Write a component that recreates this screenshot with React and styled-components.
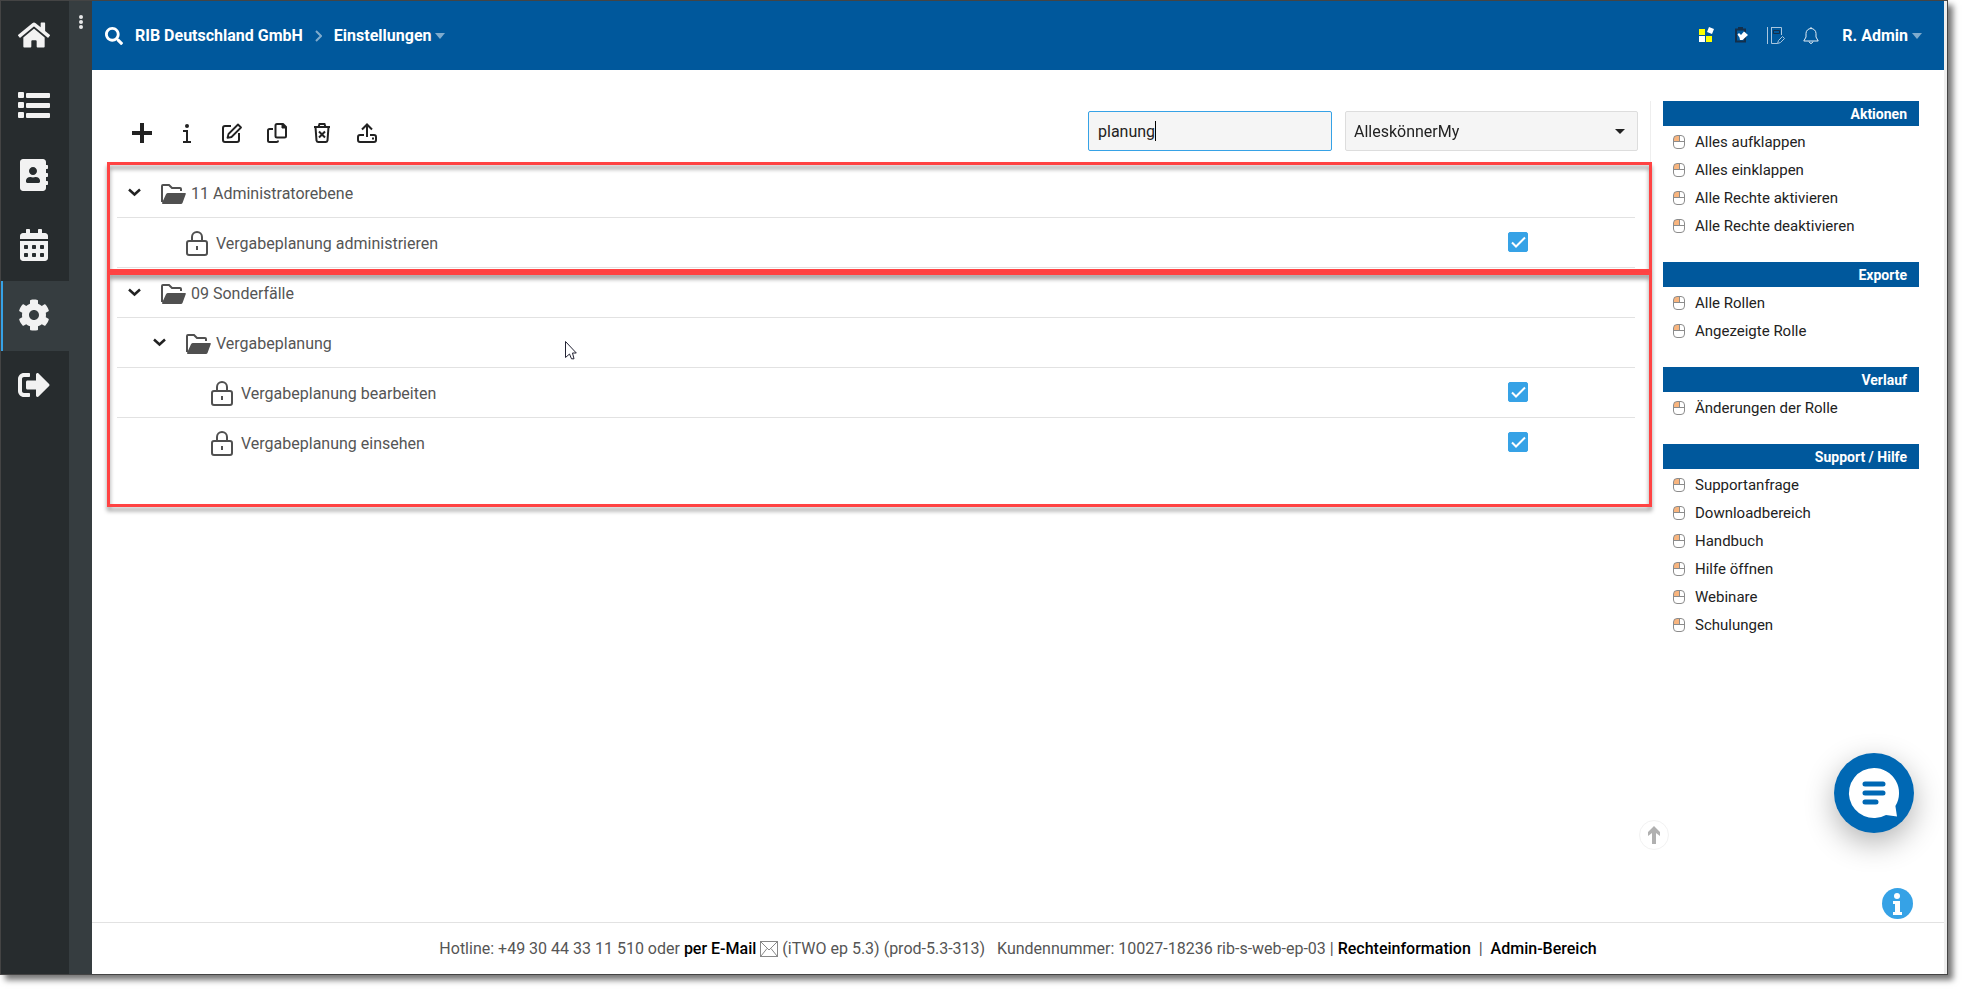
import React, { useState } from 'react'
import styled, { createGlobalStyle } from 'styled-components'
import { FaHome, FaAddressBook, FaCalendarAlt, FaCog, FaSignOutAlt, FaSearch } from 'react-icons/fa'


const NAV = [
    { label: 'Startseite', icon: FaHome },
    { label: 'Liste', icon: ListIcon },
    { label: 'Kontakte', icon: FaAddressBook },
    { label: 'Kalender', icon: FaCalendarAlt },
    { label: 'Administration', icon: FaCog, active: true },
    { label: 'Abmelden', icon: FaSignOutAlt },
]

const GROUPS = [
    {
        id: 'admin',
        rows: [
            { label: '11 Administratorebene', level: 0, folder: true },
            { label: 'Vergabeplanung administrieren', level: 1 },
        ],
    },
    {
        id: 'special',
        rows: [
            { label: '09 Sonderfälle', level: 0, folder: true },
            { label: 'Vergabeplanung', level: 1, folder: true },
            { label: 'Vergabeplanung bearbeiten', level: 2 },
            { label: 'Vergabeplanung einsehen', level: 2 },
        ],
    },
]

const SECTIONS = [
    { title: 'Aktionen', items: ['Alles aufklappen', 'Alles einklappen', 'Alle Rechte aktivieren', 'Alle Rechte deaktivieren'] },
    { title: 'Exporte', items: ['Alle Rollen', 'Angezeigte Rolle'] },
    { title: 'Verlauf', items: ['Änderungen der Rolle'] },
    { title: 'Support / Hilfe', items: ['Supportanfrage', 'Downloadbereich', 'Handbuch', 'Hilfe öffnen', 'Webinare', 'Schulungen'] },
]

const TOOLS = [
    { label: 'Neu', icon: PlusIcon },
    { label: 'Information', icon: InfoIcon },
    { label: 'Bearbeiten', icon: EditIcon },
    { label: 'Kopieren', icon: CopyIcon },
    { label: 'Löschen', icon: TrashIcon },
    { label: 'Exportieren', icon: UploadIcon },
]

export default function App() {
    const [search, setSearch] = useState('planung')

    return (
        <>
            <GlobalStyle />
            <Frame>
                <Nav>
                    {NAV.map(({ label, icon: Icon, active }) => (
                        <NavLink href='#' key={label} aria-label={label} $active={active}>
                            <Icon />
                        </NavLink>
                    ))}
                </Nav>
                <Rail>
                    <RailButton aria-label='Menü'>
                        <svg width='4' height='14' viewBox='0 0 4 14' fill='#e8e8e8'>
                            <circle cx='2' cy='2' r='2' />
                            <circle cx='2' cy='7' r='2' />
                            <circle cx='2' cy='12' r='2' />
                        </svg>
                    </RailButton>
                </Rail>
                <Page>
                    <Header />
                    <Body>
                        <Main>
                            <Toolbar>
                                {TOOLS.map(({ label, icon: Icon }) => (
                                    <ToolButton key={label} aria-label={label}><Icon /></ToolButton>
                                ))}
                                <Filters>
                                    <SearchBox>
                                        <input
                                            aria-label='Suche'
                                            value={search}
                                            autoFocus
                                            onChange={e => setSearch(e.target.value)}
                                        />
                                        <TextCursor aria-hidden='true'>{search}</TextCursor>
                                    </SearchBox>
                                    <SelectBox>
                                        <select aria-label='Rolle' defaultValue='AlleskönnerMy'>
                                            <option>AlleskönnerMy</option>
                                        </select>
                                        <Caret />
                                    </SelectBox>
                                </Filters>
                            </Toolbar>
                            <Tree>
                                {GROUPS.map(group => (
                                    <Group key={group.id} $last={group.id === 'special'}>
                                        {group.rows.map(row => <TreeRow key={row.label} {...row} />)}
                                    </Group>
                                ))}
                            </Tree>
                        </Main>
                        <Aside>
                            {SECTIONS.map(section => (
                                <section key={section.title}>
                                    <SectionTitle>{section.title}</SectionTitle>
                                    <ActionList>
                                        {section.items.map(item => (
                                            <li key={item}>
                                                <a href='#'><MouseIcon />{item}</a>
                                            </li>
                                        ))}
                                    </ActionList>
                                </section>
                            ))}
                        </Aside>
                    </Body>
                    <Footer>
                        <span>Hotline: +49 30 44 33 11 510 oder <a href='#'>per E-Mail</a> <MailIcon /> (iTWO ep 5.3) (prod-5.3-313)&nbsp;&nbsp; Kundennummer: 10027-18236 rib-s-web-ep-03 | <a href='#'>Rechteinformation</a>&nbsp; |&nbsp; <a href='#'>Admin-Bereich</a></span>
                    </Footer>
                </Page>
                <ScrollGutter />
                <TopButton aria-label='Nach oben'>
                    <svg width='12' height='18' viewBox='0 0 12 18' fill='#b0b0b0'>
                        <path d='M6 0 12 6V10L8 7V18H4V7L0 10V6Z' />
                    </svg>
                </TopButton>
                <ChatButton aria-label='Chat'>
                    <svg width='80' height='80' viewBox='0 0 80 80'>
                        <path d='M40 15a25 25 0 1 0 12 46.900l11 1.600-1.600-10.500A25 25 0 0 0 40 15Z' fill='#fff' />
                        <path d='M31 31H49M31 40H49M31 49H42' stroke='#0068b4' strokeWidth='5' strokeLinecap='round' />
                    </svg>
                </ChatButton>
                <HelpButton aria-label='Hilfe'>
                    <svg width='31' height='31' viewBox='0 0 31 31' fill='#fff'>
                        <circle cx='15' cy='8' r='3' />
                        <path d='M11 13h7v11h2v3h-9v-3h2v-8h-2z' />
                    </svg>
                </HelpButton>
                <Pointer width='13' height='21' viewBox='0 0 13 21'>
                    <path d='M1.500 1.500V17.500L5.500 14 7.500 18.800H10L8.500 13H12.300Z' fill='#fff' stroke='#223' strokeLinejoin='round' />
                </Pointer>
            </Frame>
        </>
    )
}

function Header() {
    return (
        <TopBar>
            <IconButton aria-label='Suchen'><FaSearch size={18} /></IconButton>
            <Crumbs>
                <a href='#'>RIB Deutschland GmbH</a>
                <svg width='7' height='12' viewBox='0 0 7 12' fill='none' stroke='#7fabcd' strokeWidth='2'>
                    <path d='M1 1 6 6 1 11' />
                </svg>
                <MenuButton>Einstellungen<Caret $light /></MenuButton>
            </Crumbs>
            <HeaderTools>
                <IconButton aria-label='Module'><TilesIcon /></IconButton>
                <IconButton aria-label='Aufgaben'><ClipboardIcon /></IconButton>
                <IconButton aria-label='Notizen'><NotebookIcon /></IconButton>
                <IconButton aria-label='Benachrichtigungen'><BellIcon /></IconButton>
            </HeaderTools>
            <MenuButton>R. Admin<Caret $light /></MenuButton>
        </TopBar>
    )
}

function TreeRow({ label, level, folder }) {
    const [checked, setChecked] = useState(true)

    return (
        <Row $level={level}>
            <Toggle>
                {folder && (
                    <button aria-label={`${label} einklappen`}>
                        <svg width='13' height='9' viewBox='0 0 13 9' fill='none' stroke='#222' strokeWidth='2.500'>
                            <path d='M1 1.500 6.500 6.500 12 1.500' />
                        </svg>
                    </button>
                )}
            </Toggle>
            <RowIcon>{folder ? <FolderIcon /> : <LockIcon />}</RowIcon>
            {folder ? <RowLabel>{label}</RowLabel> : (
                <>
                    <RowLabel as='label' htmlFor={label}>{label}</RowLabel>
                    <CheckBox>
                        <input id={label} type='checkbox' checked={checked} onChange={e => setChecked(e.target.checked)} />
                        <svg width='20' height='20' viewBox='0 0 20 20' fill='none' stroke='#fff' strokeWidth='2'>
                            <path d='M4 10.500 8 14.500 17 5.500' />
                        </svg>
                    </CheckBox>
                </>
            )}
        </Row>
    )
}

function ListIcon() {
    return (
        <svg width='32' height='28' viewBox='0 0 32 28' fill='currentColor'>
            <rect width='6' height='6' y='1' rx='1' />
            <rect width='6' height='6' y='11' rx='1' />
            <rect width='6' height='6' y='21' rx='1' />
            <rect width='24' height='5' x='8' y='2' rx='1' />
            <rect width='24' height='5' x='8' y='12' rx='1' />
            <rect width='24' height='5' x='8' y='22' rx='1' />
        </svg>
    )
}

function PlusIcon() {
    return (
        <svg width='20' height='20' viewBox='0 0 20 20' fill='#222'>
            <path d='M8 0h4v8h8v4h-8v8H8v-8H0V8h8z' />
        </svg>
    )
}

function InfoIcon() {
    return (
        <svg width='20' height='20' viewBox='0 0 20 20' fill='none' stroke='#222' strokeWidth='2'>
            <circle cx='10' cy='3' r='2' fill='#222' stroke='none' />
            <path d='M6 8h4v11M6 19h8' />
        </svg>
    )
}

function EditIcon() {
    return (
        <svg width='20' height='20' viewBox='0 0 20 20' fill='none' stroke='#222' strokeWidth='2' strokeLinejoin='round'>
            <path d='M9 3H3a2 2 0 0 0-2 2v12a2 2 0 0 0 2 2h12a2 2 0 0 0 2-2v-7' />
            <path d='M6.500 11 16 1.500 19 4.500 9.500 14 5.500 14.800Z' strokeWidth='1.800' />
        </svg>
    )
}

function CopyIcon() {
    return (
        <svg width='20' height='20' viewBox='0 0 20 20' fill='none' stroke='#222' strokeWidth='2' strokeLinejoin='round'>
            <path d='M10 1h6l3 3v9a1.500 1.500 0 0 1-1.500 1.500h-7.500a1.500 1.500 0 0 1-1.500-1.500V2.500A1.500 1.500 0 0 1 10 1z' />
            <path d='M15 1v4h4z' fill='#222' strokeWidth='1' />
            <path d='M6 6H2.500A1.500 1.500 0 0 0 1 7.500v10A1.500 1.500 0 0 0 2.500 19h7a1.500 1.500 0 0 0 1.500-1.500' />
        </svg>
    )
}

function TrashIcon() {
    return (
        <svg width='20' height='20' viewBox='0 0 20 20' fill='none' stroke='#222' strokeWidth='2'>
            <path d='M2 4h16M6.500 4 7.500 1h5l1 3M3.500 4 4.500 17.500a2 2 0 0 0 2 1.500h7a2 2 0 0 0 2-1.500L16.500 4' />
            <path d='m7 8.500 6 6m0-6-6 6' />
        </svg>
    )
}

function UploadIcon() {
    return (
        <svg width='20' height='20' viewBox='0 0 20 20' fill='none' stroke='#222' strokeWidth='2'>
            <path d='M10 14V2M5 6.500 10 1.500l5 5' />
            <path d='M7 12H3a2 2 0 0 0-2 2v3a2 2 0 0 0 2 2h14a2 2 0 0 0 2-2v-3a2 2 0 0 0-2-2h-4' />
            <path d='M15 15.500h2' />
        </svg>
    )
}

function FolderIcon() {
    return (
        <svg width='25' height='20' viewBox='0 0 25 20'>
            <path d='M1 18V2a1 1 0 0 1 1-1h6l3 3h8a1 1 0 0 1 1 1v2' fill='none' stroke='#505050' strokeWidth='2' />
            <path d='M7 9H24q1.300 0 .700 1.200L21.500 19q-.500 1-1.500 1H2q-1.500 0-.800-1.500L5 10.200Q5.700 9 7 9Z' fill='#505050' />
        </svg>
    )
}

function LockIcon() {
    return (
        <svg width='22' height='25' viewBox='0 0 22 25' fill='none' stroke='#505050' strokeWidth='2'>
            <rect x='1' y='10' width='20' height='14' rx='2' />
            <path d='M6 10V6a5 5 0 0 1 10 0v4M11 15v4' />
        </svg>
    )
}

function MouseIcon() {
    return (
        <svg width='12' height='14' viewBox='0 0 12 14' fill='none' stroke='#8c8c8c'>
            <path d='M1 1h5v5H1z' fill='#f9b57e' stroke='none' />
            <rect x='.500' y='.500' width='11' height='13' rx='3.500' />
            <path d='M0 6.500h12M6.500 0v6.500' />
        </svg>
    )
}

function MailIcon() {
    return (
        <svg width='18' height='16' viewBox='0 0 18 16' fill='none' stroke='#888'>
            <rect x='.500' y='.500' width='17' height='15' />
            <path d='m1 1 8 8 8-8M1 15l6-7.500M17 15l-6-7.500' />
        </svg>
    )
}

function TilesIcon() {
    return (
        <svg width='16' height='16' viewBox='0 0 16 16'>
            <path d='M0 2h6v6H0zM7 9h6v6H7z' fill='#ffff00' />
            <path d='M0 9h6v6H0zM10 0l5 2-2 5-5-2z' fill='#fff' />
        </svg>
    )
}

function ClipboardIcon() {
    return (
        <svg width='16' height='16' viewBox='0 0 16 16'>
            <path d='M12 10v4.500H3V2.500h9V5M5 1h5' fill='none' stroke='#132f4b' strokeWidth='2' />
            <path d='M4.500 7.500 6 6l2 2 3-3.500 4 3.500-5.500 5H7l-.500-2.500Z' fill='#fff' />
        </svg>
    )
}

function NotebookIcon() {
    return (
        <svg width='18' height='18' viewBox='0 0 18 18' fill='none' stroke='#a9c6de'>
            <path d='M.500 0v17M4.500 0v16.500h6M4.500 .500h10V8' />
            <path d='M6.500 3.500h6v3h-6z' stroke='#132f4b' />
            <path d='M10.500 16.500l1-3 4-4 2 2-4 4z' />
        </svg>
    )
}

function BellIcon() {
    return (
        <svg width='16' height='18' viewBox='0 0 16 18' fill='none' stroke='#e4eef6'>
            <path d='M8 1.500a5 5 0 0 0-5 5V10L.800 14h14.400L13 10V6.500a5 5 0 0 0-5-5zM6 14.500q2 4 4 0M8 0v1.500' />
        </svg>
    )
}

const GlobalStyle = createGlobalStyle`
    * {
        box-sizing: border-box;
    }

    body {
        margin: 0;
        background: #fff;
        font-family: Roboto, "Liberation Sans", sans-serif;
        font-size: 16px;
        color: #555;
    }

    button, input, select {
        font: inherit;
        color: inherit;
    }

    button {
        padding: 0;
        border: 0;
        background: none;
        cursor: pointer;
    }

    a {
        color: inherit;
        text-decoration: none;
    }

    svg {
        flex: none;
    }
`

const Frame = styled.div`
    position: relative;
    display: flex;
    min-height: calc(100vh - 15px);
    margin: 0 15px 15px 0;
    border: 1px solid #444;
    box-shadow: 5px 5px 6px #777;
`

const Nav = styled.nav`
    flex: none;
    width: 68px;
    background: #272c2e;
`

const NavLink = styled.a`
    display: flex;
    align-items: center;
    justify-content: center;
    height: 70px;
    padding: 0 2px 2px 0;
    color: #f2f2f2;
    font-size: 32px;
    background: ${props => props.$active && '#363d40'};
    box-shadow: ${props => props.$active && 'inset 2px 0 #36a2e6'};
`

const Rail = styled.div`
    flex: none;
    width: 23px;
    background: #363d40;
`

const RailButton = styled.button`
    display: flex;
    justify-content: center;
    width: 100%;
    padding-top: 14px;
`

const Page = styled.div`
    flex: 1;
    min-width: 0;
    display: flex;
    flex-direction: column;
`

const ScrollGutter = styled.div`
    flex: none;
    width: 3px;
    background: #eee;
`

const TopBar = styled.header`
    display: flex;
    align-items: center;
    height: 69px;
    padding: 0 22px 0 13px;
    background: #00589c;
    color: #fff;
    font-weight: 700;
`

const Crumbs = styled.div`
    display: flex;
    align-items: center;
    gap: 12px;
    margin-left: 12px;
`

const IconButton = styled.button`
    display: flex;
`

const MenuButton = styled.button`
    display: flex;
    align-items: center;
    gap: 4px;
    font-weight: 700;
`

const Caret = styled.span`
    border: 5px solid transparent;
    border-top: ${props => props.$light ? '6px solid #7fabcd' : '5px solid #222'};
    border-bottom-width: 0;
`

const HeaderTools = styled.div`
    display: flex;
    gap: 18px;
    margin: 0 23px 0 auto;
`

const Body = styled.div`
    flex: 1;
    display: flex;
    align-items: flex-start;
    padding: 31px 25px 31px 15px;
`

const Main = styled.main`
    flex: 1;
    min-width: 0;
    padding: 10px 15px 0 10px;
    border-right: 1px solid #eee;
`

const Toolbar = styled.div`
    display: flex;
    align-items: center;
    height: 40px;
    margin: 0 -3px 17px 15px;
    gap: 25px;
`

const ToolButton = styled.button`
    display: flex;
    padding-top: 4px;
`

const Filters = styled.div`
    display: flex;
    gap: 13px;
    margin-left: auto;
    color: #222;
`

const SearchBox = styled.div`
    position: relative;
    width: 244px;
    height: 40px;

    input {
        width: 100%;
        height: 100%;
        padding: 0 9px;
        border: 1px solid #36a2e6;
        border-radius: 2px;
        outline: 0;
        background: #f5f5f5;
        caret-color: transparent;
    }
`

const TextCursor = styled.span`
    position: absolute;
    top: 10px;
    left: 10px;
    height: 20px;
    border-right: 1px solid #000;
    color: transparent;
    white-space: pre;
    pointer-events: none;
`

const SelectBox = styled.div`
    position: relative;
    width: 293px;
    height: 40px;

    select {
        width: 100%;
        height: 100%;
        padding: 0 8px;
        border: 1px solid #ddd;
        border-radius: 2px;
        background: #f5f5f5;
        appearance: none;
    }

    ${Caret} {
        position: absolute;
        top: 18px;
        right: 13px;
        pointer-events: none;
    }
`

const Tree = styled.div`
    display: flex;
    flex-direction: column;
`

const Group = styled.div`
    position: relative;
    padding-bottom: ${props => props.$last ? '39px' : '0'};

    /* red marker drawn around the rows */
    &::after {
        content: '';
        position: absolute;
        inset: ${props => props.$last ? '4px -17px 0 -10px' : '-6px -17px -4px -10px'};
        border: 3px solid #ff4343;
        filter: drop-shadow(0 4px 2px rgba(0, 0, 0, 0.4));
        pointer-events: none;
    }
`

const Row = styled.div`
    display: flex;
    align-items: center;
    height: 50px;
    padding-left: ${props => 11 + props.$level * 25}px;
    border-bottom: 1px solid #e2e2e2;

    &:last-child {
        border-bottom-color: ${props => props.$level === 2 && 'transparent'};
    }
`

const Toggle = styled.span`
    width: 32px;

    button {
        display: flex;
    }
`

const RowIcon = styled.span`
    display: flex;
    width: 25px;
    margin-right: 6px;
    padding: 2px 0 0 1px;
`

const RowLabel = styled.span`
    flex: 1;
    padding-top: 2px;
`

const CheckBox = styled.span`
    position: relative;
    width: 20px;
    height: 20px;
    margin: 0 107px 2px 0;

    input {
        display: block;
        appearance: none;
        width: 20px;
        height: 20px;
        margin: 0;
        border: 1px solid #36a2e6;
        border-radius: 2px;
    }

    input:checked {
        background: #36a2e6;
    }

    svg {
        position: absolute;
        inset: 0;
        pointer-events: none;
    }
`

const Aside = styled.aside`
    display: flex;
    flex-direction: column;
    gap: 21px;
    width: 256px;
    margin-left: 12px;
    color: #222;
    font-size: 15px;
`

const SectionTitle = styled.h2`
    margin: 0 0 2px;
    padding: 2px 12px 0;
    background: #00589c;
    color: #fff;
    font-size: 14px;
    font-weight: 700;
    line-height: 23px;
    text-align: right;
`

const ActionList = styled.ul`
    margin: 0;
    padding: 0 0 1px;
    list-style: none;

    a {
        display: flex;
        align-items: center;
        gap: 10px;
        height: 28px;
        padding-left: 10px;
    }
`

const Footer = styled.footer`
    display: flex;
    justify-content: center;
    align-items: center;
    height: 52px;
    border-top: 1px solid #e2e2e2;

    a {
        color: #000;
        font-weight: 500;
    }

    svg {
        vertical-align: -3px;
    }
`

const FloatingButton = styled.button`
    position: absolute;
    display: flex;
    align-items: center;
    justify-content: center;
    border-radius: 50%;
`

const TopButton = styled(FloatingButton)`
    right: 278px;
    bottom: 124px;
    width: 30px;
    height: 30px;
    border: 1px solid #f2f2f2;
`

const ChatButton = styled(FloatingButton)`
    right: 33px;
    bottom: 141px;
    width: 80px;
    height: 80px;
    background: #0068b4;
    box-shadow: 0 10px 30px rgba(0, 0, 0, 0.3);
`

const HelpButton = styled(FloatingButton)`
    right: 34px;
    bottom: 55px;
    width: 31px;
    height: 31px;
    background: #36a2e6;
`

const Pointer = styled.svg`
    position: absolute;
    top: 339px;
    left: 563px;
`
